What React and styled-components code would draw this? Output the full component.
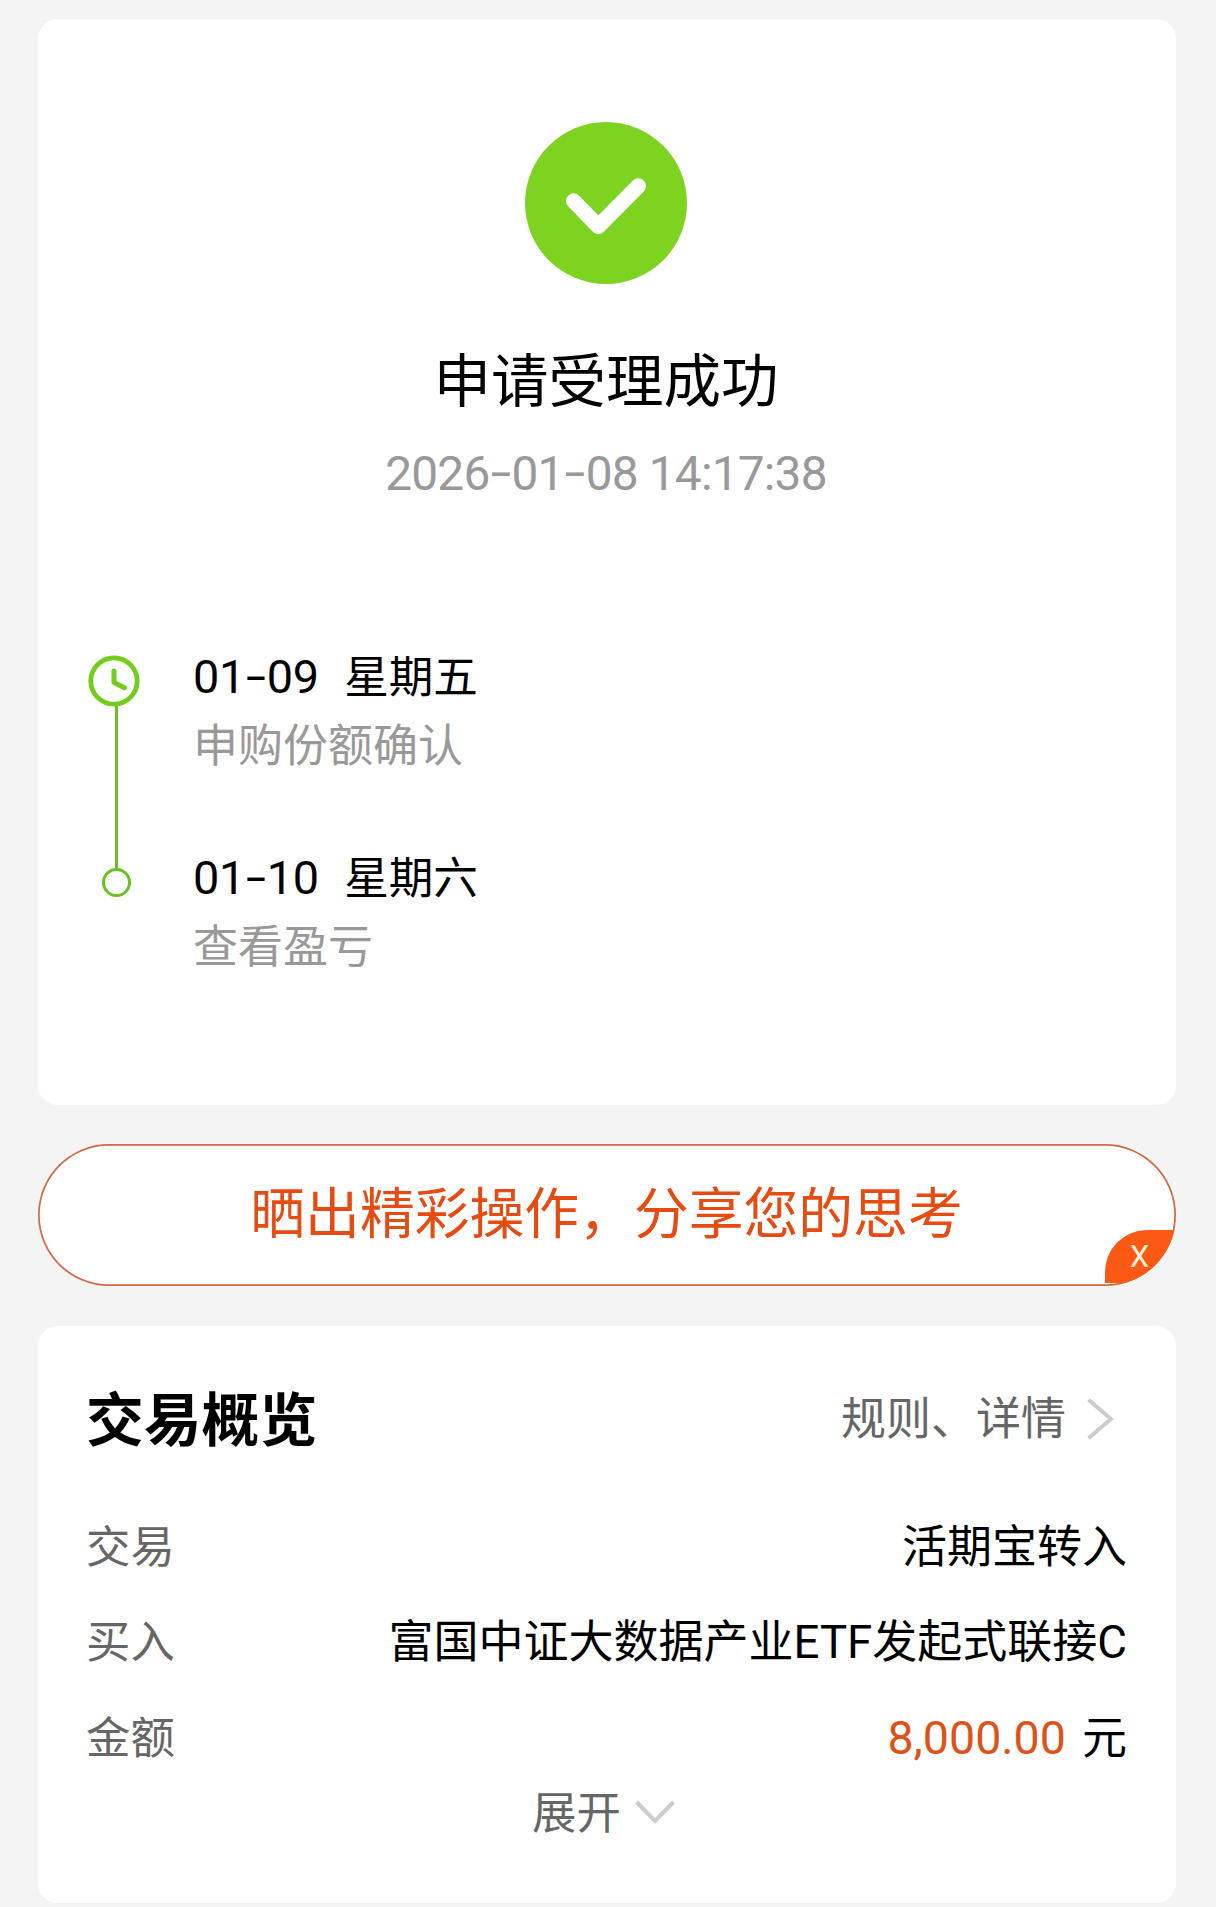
import React from "react";
import styled, { createGlobalStyle } from "styled-components";

const steps = [
  { date: "01-09", day: "星期五", note: "申购份额确认" },
  { date: "01-10", day: "星期六", note: "查看盈亏" },
];

// digits with wide hyphens between the date parts
function DateText({ value }) {
  return value.split("-").map((part, index) => (
    <React.Fragment key={index}>
      {index > 0 && <Hyphen>-</Hyphen>}
      {part}
    </React.Fragment>
  ));
}

function App() {
  return (
    <Page>
      <GlobalStyle />
      <ResultCard>
        <SuccessIcon viewBox="0 0 162 162">
          <circle cx="81" cy="81" r="81" fill="#7ed321" />
          <path
            d="M48.7 79 L73.3 104.3 L113.3 64"
            fill="none"
            stroke="#fff"
            strokeWidth="15.4"
            strokeLinecap="round"
            strokeLinejoin="round"
          />
        </SuccessIcon>
        <ResultTitle>申请受理成功</ResultTitle>
        <ResultTime>
          <DateText value="2026-01-08 14:17:38" />
        </ResultTime>

        <Timeline>
          <Rail>
            <ClockIcon viewBox="0 0 52 52">
              <circle cx="26" cy="26" r="23.2" strokeWidth="4.8" />
              <path d="M26 16 V27.5 L36.5 32.8" strokeWidth="5" />
            </ClockIcon>
            <RailLine />
            <RailDot />
          </Rail>
          <Steps>
            {steps.map((step) => (
              <Step key={step.date}>
                <StepDate>
                  <Digits>
                    <DateText value={step.date} />
                  </Digits>
                  <span>{step.day}</span>
                </StepDate>
                <StepNote>{step.note}</StepNote>
              </Step>
            ))}
          </Steps>
        </Timeline>
      </ResultCard>

      <ShareButton>
        晒出精彩操作，分享您的思考
        <CloseBadge>X</CloseBadge>
      </ShareButton>

      <OverviewCard>
        <OverviewHeader>
          <OverviewTitle>交易概览</OverviewTitle>
          <RulesLink>
            规则、详情
            <Chevron width="28" height="44" viewBox="0 0 28 44">
              <path d="M2.5 2.8 L25 22 L2.5 41.2" />
            </Chevron>
          </RulesLink>
        </OverviewHeader>
        <Row>
          <Label>交易</Label>
          <Value>活期宝转入</Value>
        </Row>
        <Row>
          <Label>买入</Label>
          <Value>
            富国中证大数据产业<Latin>ETF</Latin>发起式联接<Latin>C</Latin>
          </Value>
        </Row>
        <Row>
          <Label>金额</Label>
          <Value>
            <Amount>8,000.00</Amount>元
          </Value>
        </Row>
        <Expand>
          展开
          <Chevron width="42" height="24" viewBox="0 0 42 24">
            <path d="M2.5 2 L21 21 L39.5 2" />
          </Chevron>
        </Expand>
      </OverviewCard>
    </Page>
  );
}

// Styled components
const GlobalStyle = createGlobalStyle`
  * {
    box-sizing: border-box;
  }

  body {
    margin: 0;
    background: #f4f4f4;
    color: #000;
    font-family: "Noto Sans CJK SC", sans-serif;
  }
`;

const Page = styled.div`
  display: flex;
  flex-direction: column;
  width: 1216px;
  height: 1907px;
  padding: 19px 40px 0 38px;
`;

const Card = styled.section`
  border-radius: 20px;
  background: #fff;
`;

const ResultCard = styled(Card)`
  display: flex;
  flex-direction: column;
  align-items: center;
  height: 1086px;
  padding: 103px 50px 0;
`;

const SuccessIcon = styled.svg`
  width: 162px;
  height: 162px;
  margin-right: 2px;
`;

const ResultTitle = styled.h1`
  margin: 53px 2px 0 0;
  font-size: 57.5px;
  font-weight: 400;
  line-height: 80px;
`;

const ResultTime = styled.div`
  margin: 27px 2px 0 0;
  color: #999;
  font-family: Roboto, sans-serif;
  font-size: 47.8px;
  line-height: 60px;
  letter-spacing: -0.8px;
`;

const Hyphen = styled.span`
  display: inline-block;
  width: 22px;
  text-align: center;
  letter-spacing: 0;
  transform: translateY(-1px) scaleX(1.55);
`;

const Timeline = styled.div`
  display: flex;
  align-self: stretch;
  margin-top: 142px;
`;

const Rail = styled.div`
  display: flex;
  flex-direction: column;
  align-items: center;
  width: 56px;
  padding-top: 9px;
`;

const ClockIcon = styled.svg`
  width: 52px;
  height: 52px;
  margin-right: 4px;
  fill: none;
  stroke: #74cc1c;
  stroke-linecap: round;
  stroke-linejoin: round;
`;

const RailLine = styled.div`
  width: 3px;
  height: 162px;
  margin-top: -1px;
  background: #6fbc2e;
`;

const RailDot = styled.div`
  width: 29px;
  height: 29px;
  border: 3px solid #6cc024;
  border-radius: 50%;
`;

const Steps = styled.div`
  margin-left: 49px;
`;

const Step = styled.div`
  height: 200.6px;
`;

const StepDate = styled.div`
  display: flex;
  align-items: baseline;
  gap: 25.5px;
  height: 56px;
  font-size: 44.6px;
  line-height: 56px;
`;

const Digits = styled.span`
  font-family: Roboto, sans-serif;
  font-size: 46.8px;
  line-height: 1;
  letter-spacing: -0.4px;
`;

const StepNote = styled.div`
  margin-top: 13px;
  color: #999;
  font-size: 45px;
  line-height: 56px;
`;

const ShareButton = styled.button`
  position: relative;
  display: flex;
  justify-content: center;
  height: 142px;
  margin-top: 39px;
  padding: 25px 1px 0 0;
  overflow: hidden;
  border: none;
  border-radius: 71px;
  background: #fff;
  box-shadow: inset 0 0 0 1.7px #d0693f;
  color: #e64b12;
  font-family: inherit;
  font-size: 54.8px;
  line-height: 80px;
`;

const CloseBadge = styled.span`
  position: absolute;
  right: 0;
  bottom: 3px;
  width: 71px;
  height: 53px;
  padding-right: 2px;
  border-top-left-radius: 42px;
  background: #fc5a14;
  color: #fff0dc;
  font-family: Roboto, sans-serif;
  font-size: 31px;
  line-height: 53px;
  text-align: center;
`;

const OverviewCard = styled(Card)`
  height: 577px;
  margin-top: 40px;
  padding: 50px 50px 0 48px;
`;

const OverviewHeader = styled.div`
  display: flex;
  justify-content: space-between;
  height: 80px;
  margin-bottom: 39.5px;
  line-height: 80px;
`;

const OverviewTitle = styled.h2`
  margin: 0;
  font-size: 57.8px;
  font-weight: 700;
`;

const RulesLink = styled.div`
  display: flex;
  align-items: center;
  gap: 20px;
  padding-right: 12px;
  color: #666;
  font-size: 45px;
`;

const Chevron = styled.svg`
  margin-top: 5px;
  fill: none;
  stroke: #ccc;
  stroke-width: 4;
`;

const Row = styled.div`
  display: flex;
  justify-content: space-between;
  height: 95.7px;
  font-size: 45px;
  line-height: 96px;
`;

const Label = styled.span`
  color: #666;
  font-size: 44.4px;
`;

const Value = styled.span`
  display: flex;
  align-items: baseline;
  margin-right: -1px;
`;

const Latin = styled.span`
  font-family: Roboto, sans-serif;
  font-size: 45.6px;
  line-height: 1;
`;

const Amount = styled(Latin)`
  margin-right: 16px;
  color: #dc5219;
  font-size: 46.6px;
`;

const Expand = styled.div`
  display: flex;
  align-items: center;
  justify-content: center;
  gap: 13px;
  padding-right: 4px;
  color: #666;
  font-size: 44.4px;
  line-height: 54px;
`;

export default App;
